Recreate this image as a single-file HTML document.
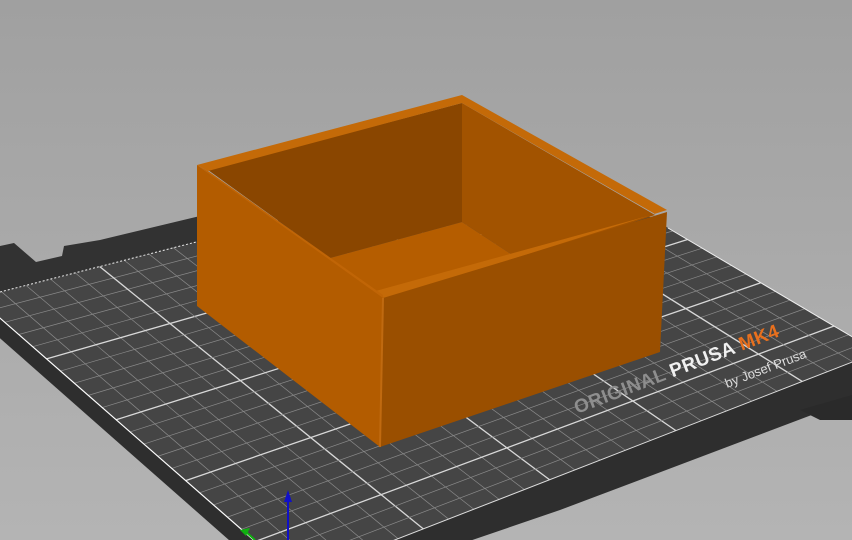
<!DOCTYPE html>
<html><head><meta charset="utf-8"><style>
html,body{margin:0;padding:0;width:852px;height:540px;overflow:hidden;background:linear-gradient(#a0a0a0,#b4b4b4);}
svg{display:block}
</style></head><body>
<svg id="s" width="852" height="540" viewBox="0 0 852 540" xmlns="http://www.w3.org/2000/svg">
<defs><clipPath id="pl"><polygon points="-23,298 541,153 878,352 297,578"/></clipPath></defs>
<polygon points="0,246 14,243 36,262 62,256 64,246 100,240 200,216 200,250 0,300" fill="#323232"/>
<polygon points="-23,298 541,153 878,352 878,390 560,510 297,600 -23,318" fill="#2e2e2e"/>
<polygon points="852,395 852,420 820,420 800,410" fill="#2a2a2a"/>
<polygon points="-23,298 541,153 878,352 297,578" fill="#454545"/>
<g id="grid" clip-path="url(#pl)"></g>
<line x1="-23" y1="298" x2="297" y2="578" stroke="#fff" stroke-width="1.2"/>
<line x1="297" y1="578" x2="878" y2="352" stroke="#ddd" stroke-width="1"/>
<line x1="668" y1="228" x2="878" y2="352" stroke="#eee" stroke-width="1"/>
<line x1="0" y1="292" x2="200" y2="241" stroke="#eee" stroke-width="1" stroke-dasharray="2,2"/>
<g transform="translate(577,414) rotate(-21)" font-family="Liberation Sans, sans-serif" font-weight="bold" font-size="19" letter-spacing="0.5">
<text x="0" y="0"><tspan fill="#8e8e8e">ORIGINAL </tspan><tspan fill="#f0f0f0">PRUSA </tspan><tspan fill="#e8701e">MK4</tspan></text>
</g>
<text transform="translate(727,388) rotate(-21)" font-family="Liberation Sans, sans-serif" font-size="13" fill="#dcdcdc">by Josef Prusa</text>
<polygon points="208,170 462,103 462,222 330,258 383,296" fill="#8a4600"/>
<polygon points="462,103 655,215 520,260 462,222" fill="#a25300"/>
<polygon points="330,258 462,222 520,260 383,296" fill="#b55d00"/>
<polygon points="197,165 462,95 667,210 383,300 372,292 655,214 462,103 208,171" fill="#c46a08"/>
<polygon points="197,165 208,171 383,295 383,300" fill="#c06506"/>
<polygon points="197,165 383,298 380,447 197,306" fill="#b35c00"/>
<polygon points="383,298 667,212 660,352 380,447" fill="#9a4f00"/>
<line x1="383" y1="298" x2="380" y2="447" stroke="#c06a10" stroke-width="2"/>
<line x1="288" y1="540" x2="288" y2="500" stroke="#1010c8" stroke-width="2"/>
<polygon points="284,502 288,490 292,502" fill="#1010c8"/>
<polygon points="240,530 250,528 246,536" fill="#10b010"/>
<line x1="246" y1="532" x2="255" y2="540" stroke="#10b010" stroke-width="2"/>
</svg>
<script>
var g=document.getElementById('grid');
var A=[-23,298],B=[541,153],C=[878,352],D=[297,578];
function L(p,q,t){return [p[0]+(q[0]-p[0])*t,p[1]+(q[1]-p[1])*t];}
var N=23,s='';
for(var i=1;i<N;i++){var t=i/N,w=(i%5==0)?1.3:0.7,c=(i%5==0)?'#d8d8d8':'#8a8a8a';
var p=L(A,B,t),q=L(D,C,t);s+='<line x1="'+p[0]+'" y1="'+p[1]+'" x2="'+q[0]+'" y2="'+q[1]+'" stroke="'+c+'" stroke-width="'+w+'"/>';
p=L(A,D,t);q=L(B,C,t);s+='<line x1="'+p[0]+'" y1="'+p[1]+'" x2="'+q[0]+'" y2="'+q[1]+'" stroke="'+c+'" stroke-width="'+w+'"/>';}
g.innerHTML=s;
</script>
</body></html>
